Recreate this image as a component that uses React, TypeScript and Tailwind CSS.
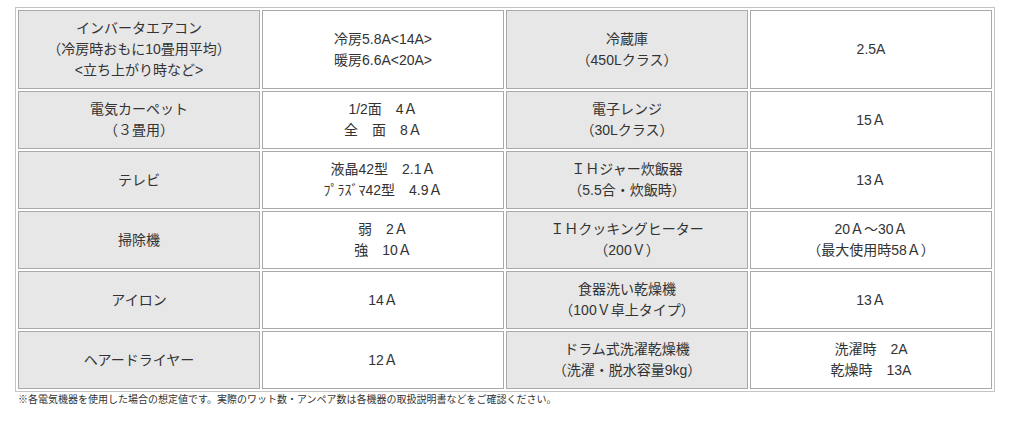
type Row = [string[], string[], string[], string[]];

const rows: Row[] = [
  [
    ['インバータエアコン', '（冷房時おもに10畳用平均）', '<立ち上がり時など>'],
    ['冷房5.8A<14A>', '暖房6.6A<20A>'],
    ['冷蔵庫', '（450Lクラス）'],
    ['2.5A'],
  ],
  [
    ['電気カーペット', '（３畳用）'],
    ['1/2面　4Ａ', '全　面　8Ａ'],
    ['電子レンジ', '（30Lクラス）'],
    ['15Ａ'],
  ],
  [
    ['テレビ'],
    ['液晶42型　2.1Ａ', 'ﾌﾟﾗｽﾞﾏ42型　4.9Ａ'],
    ['ＩＨジャー炊飯器', '（5.5合・炊飯時）'],
    ['13Ａ'],
  ],
  [
    ['掃除機'],
    ['弱　2Ａ', '強　10Ａ'],
    ['ＩＨクッキングヒーター', '（200Ｖ）'],
    ['20Ａ～30Ａ', '（最大使用時58Ａ）'],
  ],
  [
    ['アイロン'],
    ['14Ａ'],
    ['食器洗い乾燥機', '（100Ｖ卓上タイプ）'],
    ['13Ａ'],
  ],
  [
    ['ヘアードライヤー'],
    ['12Ａ'],
    ['ドラム式洗濯乾燥機', '（洗濯・脱水容量9kg）'],
    ['洗濯時　2A', '乾燥時　13A'],
  ],
];

function Cell({ lines, head }: { lines: string[]; head?: boolean }) {
  return (
    <td
      className={`w-[242px] border border-[#a9a9a9] px-2 py-[7px] text-center align-middle ${
        head ? 'bg-[#e7e7e7]' : 'bg-white'
      }`}
    >
      {lines.map((l, i) => (
        <div key={i} className="whitespace-pre">
          {l}
        </div>
      ))}
    </td>
  );
}

export default function App() {
  return (
    <div className="min-h-[426px] bg-white pl-[15px] pt-[7px] font-['Liberation_Sans','Noto_Sans_CJK_JP',sans-serif] text-[#333]">
      <table className="w-[980px] table-fixed border-separate border-spacing-[2px] border border-[#c4c4c4] text-[14px] leading-[21px]">
        <tbody>
          {rows.map((r, i) => (
            <tr key={i}>
              <Cell lines={r[0]} head />
              <Cell lines={r[1]} />
              <Cell lines={r[2]} head />
              <Cell lines={r[3]} />
            </tr>
          ))}
        </tbody>
      </table>
      <p className="mt-[2px] pl-[3px] text-[10px] leading-[12px] text-[#333]">
        ※各電気機器を使用した場合の想定値です。実際のワット数・アンペア数は各機器の取扱説明書などをご確認ください。
      </p>
    </div>
  );
}
